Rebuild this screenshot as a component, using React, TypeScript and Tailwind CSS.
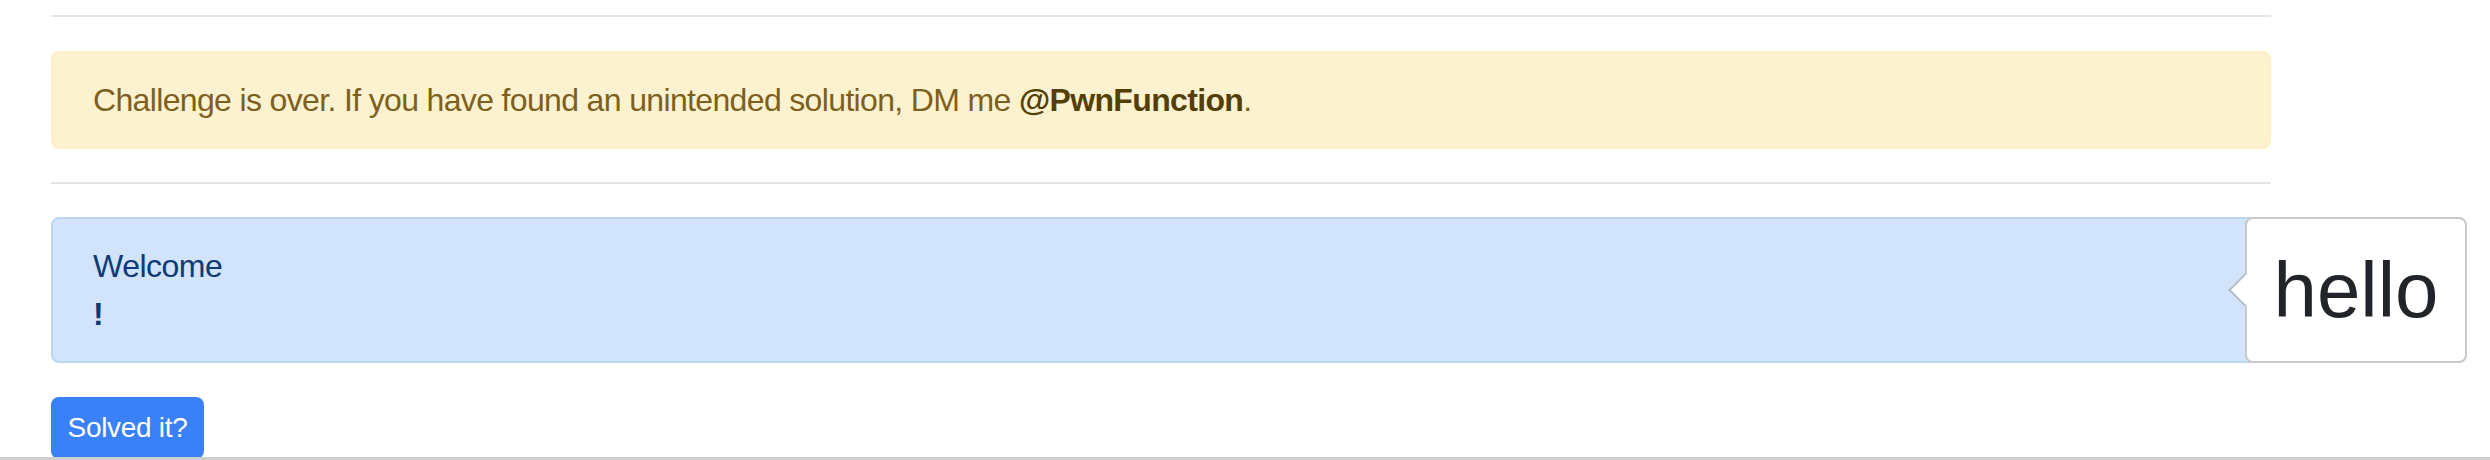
export default function App() {
  return (
    <div className="relative h-[460px] w-[2490px] overflow-hidden bg-white font-['Liberation_Sans',Arial,sans-serif]">
      <div className="ml-[51px] flex w-[2220px] flex-col pt-[15px]">
        <div className="h-[2px] bg-[#e5e5e5]" />

        <div className="mt-[34px] flex h-[98px] items-center rounded-[8px] border-2 border-[#fcefc6] bg-[#fdf2cf] px-[40px] text-[32px] tracking-[-0.65px] text-[#7d5f1e]">
          <span>
            Challenge is over. If you have found an unintended solution, DM me{" "}
            <b className="font-bold text-[#533f03]">@PwnFunction</b>.
          </span>
        </div>

        <div className="mt-[33px] h-[2px] bg-[#e5e5e5]" />

        <div className="mt-[33px] flex h-[146px] flex-col justify-center rounded-[8px] border-2 border-[#bcd6f5] bg-[#d1e4fb] px-[40px] text-[32px] leading-[48px] tracking-[-0.5px] text-[#0f3a74]">
          <div>Welcome</div>
          <div className="font-bold">!</div>
        </div>

        <div className="mt-[34px]">
          <button className="flex h-[62px] w-[153px] items-center justify-center rounded-[8px] bg-[#3a80f6] text-[28px] tracking-[-0.3px] text-white">
            Solved it?
          </button>
        </div>
      </div>

      {/* tooltip sitting over the blue alert */}
      <div className="absolute left-[2245px] top-[217px] flex h-[146px] w-[222px] items-center justify-center rounded-[8px] border-2 border-[#c9c9c9] bg-white">
        <div className="absolute left-[-14px] top-[59px] h-[24px] w-[24px] rotate-45 border-b-2 border-l-2 border-[#b3bccb] bg-white" />
        <span className="relative text-[78px] leading-none text-[#212529]">hello</span>
      </div>

      <div className="absolute bottom-0 left-0 right-0 h-[3px] bg-[#cfcfcf]" />
    </div>
  );
}
